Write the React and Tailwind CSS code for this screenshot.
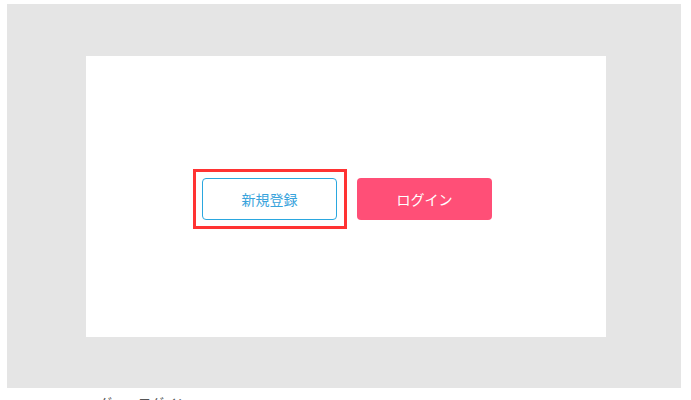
export default function App() {
  return (
    <div
      className="w-[691px] h-[400px] overflow-hidden bg-white pl-[7px] pt-[4px]"
      style={{ fontFamily: '"Noto Sans CJK JP", "Noto Sans", sans-serif' }}
    >
      <div className="w-[674px] h-[384px] bg-[#e5e5e5] pl-[79px] pt-[52px]">
        <div className="w-[520px] h-[281px] bg-white flex items-center justify-center gap-5 pt-[5px] pl-[2px]">
          <button className="relative w-[135px] h-[42px] rounded border border-[#2aa7df] bg-white text-[14px] text-[#38a3dc]">
            新規登録
            {/* highlight frame */}
            <span className="absolute -left-[10px] -top-[10px] -right-[11px] -bottom-[10px] border-[3px] border-[#ff3333]" />
          </button>
          <button className="w-[135px] h-[42px] rounded bg-[#ff4f77] text-[14px] text-white">
            ログイン
          </button>
        </div>
      </div>
      <div className="pl-[66px] pt-[8px] text-[13px] text-[#555] leading-none">
        ヘッダー　ログイン
      </div>
    </div>
  );
}
